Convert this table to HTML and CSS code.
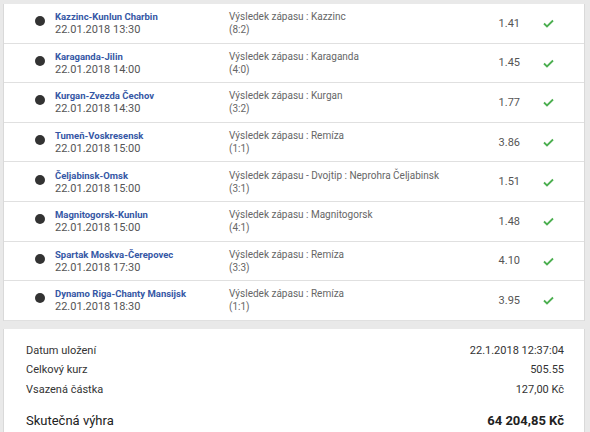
FILE: index.html
```html
<!DOCTYPE html>
<html lang="cs">
  <head>
    <meta charset="UTF-8" />
    <meta name="viewport" content="width=device-width, initial-scale=1.0" />
    <title>Tiket</title>
    <link rel="stylesheet" href="styles.css">
  </head>
  <body>
    <div class="ticket">
      <div class="bets">
        <div class="bet">
          <span class="dot"></span>
          <div class="match">
            <a class="match-name" href="#">Kazzinc-Kunlun Charbin</a>
            <div class="match-date">22.01.2018 13:30</div>
          </div>
          <div class="tip">Výsledek zápasu : Kazzinc<br />(8:2)</div>
          <div class="odds">1.41</div>
          <div class="state"><svg width="11" height="9" viewBox="0 0 11 9"><polyline points="1,4.5 4,7.5 10,1.5" fill="none" stroke="#4caf50" stroke-width="1.8" /></svg></div>
        </div>
        <div class="bet">
          <span class="dot"></span>
          <div class="match">
            <a class="match-name" href="#">Karaganda-Jilin</a>
            <div class="match-date">22.01.2018 14:00</div>
          </div>
          <div class="tip">Výsledek zápasu : Karaganda<br />(4:0)</div>
          <div class="odds">1.45</div>
          <div class="state"><svg width="11" height="9" viewBox="0 0 11 9"><polyline points="1,4.5 4,7.5 10,1.5" fill="none" stroke="#4caf50" stroke-width="1.8" /></svg></div>
        </div>
        <div class="bet">
          <span class="dot"></span>
          <div class="match">
            <a class="match-name" href="#">Kurgan-Zvezda Čechov</a>
            <div class="match-date">22.01.2018 14:30</div>
          </div>
          <div class="tip">Výsledek zápasu : Kurgan<br />(3:2)</div>
          <div class="odds">1.77</div>
          <div class="state"><svg width="11" height="9" viewBox="0 0 11 9"><polyline points="1,4.5 4,7.5 10,1.5" fill="none" stroke="#4caf50" stroke-width="1.8" /></svg></div>
        </div>
        <div class="bet">
          <span class="dot"></span>
          <div class="match">
            <a class="match-name" href="#">Tumeň-Voskresensk</a>
            <div class="match-date">22.01.2018 15:00</div>
          </div>
          <div class="tip">Výsledek zápasu : Remíza<br />(1:1)</div>
          <div class="odds">3.86</div>
          <div class="state"><svg width="11" height="9" viewBox="0 0 11 9"><polyline points="1,4.5 4,7.5 10,1.5" fill="none" stroke="#4caf50" stroke-width="1.8" /></svg></div>
        </div>
        <div class="bet">
          <span class="dot"></span>
          <div class="match">
            <a class="match-name" href="#">Čeljabinsk-Omsk</a>
            <div class="match-date">22.01.2018 15:00</div>
          </div>
          <div class="tip">Výsledek zápasu - Dvojtip : Neprohra Čeljabinsk<br />(3:1)</div>
          <div class="odds">1.51</div>
          <div class="state"><svg width="11" height="9" viewBox="0 0 11 9"><polyline points="1,4.5 4,7.5 10,1.5" fill="none" stroke="#4caf50" stroke-width="1.8" /></svg></div>
        </div>
        <div class="bet">
          <span class="dot"></span>
          <div class="match">
            <a class="match-name" href="#">Magnitogorsk-Kunlun</a>
            <div class="match-date">22.01.2018 15:00</div>
          </div>
          <div class="tip">Výsledek zápasu : Magnitogorsk<br />(4:1)</div>
          <div class="odds">1.48</div>
          <div class="state"><svg width="11" height="9" viewBox="0 0 11 9"><polyline points="1,4.5 4,7.5 10,1.5" fill="none" stroke="#4caf50" stroke-width="1.8" /></svg></div>
        </div>
        <div class="bet">
          <span class="dot"></span>
          <div class="match">
            <a class="match-name" href="#">Spartak Moskva-Čerepovec</a>
            <div class="match-date">22.01.2018 17:30</div>
          </div>
          <div class="tip">Výsledek zápasu : Remíza<br />(3:3)</div>
          <div class="odds">4.10</div>
          <div class="state"><svg width="11" height="9" viewBox="0 0 11 9"><polyline points="1,4.5 4,7.5 10,1.5" fill="none" stroke="#4caf50" stroke-width="1.8" /></svg></div>
        </div>
        <div class="bet">
          <span class="dot"></span>
          <div class="match">
            <a class="match-name" href="#">Dynamo Riga-Chanty Mansijsk</a>
            <div class="match-date">22.01.2018 18:30</div>
          </div>
          <div class="tip">Výsledek zápasu : Remíza<br />(1:1)</div>
          <div class="odds">3.95</div>
          <div class="state"><svg width="11" height="9" viewBox="0 0 11 9"><polyline points="1,4.5 4,7.5 10,1.5" fill="none" stroke="#4caf50" stroke-width="1.8" /></svg></div>
        </div>
      </div>
      <div class="summary">
        <div class="summary-row">
          <span>Datum uložení</span>
          <span>22.1.2018 12:37:04</span>
        </div>
        <div class="summary-row">
          <span>Celkový kurz</span>
          <span>505.55</span>
        </div>
        <div class="summary-row">
          <span>Vsazená částka</span>
          <span>127,00 Kč</span>
        </div>
        <div class="summary-row total">
          <span>Skutečná výhra</span>
          <span class="total-value">64 204,85 Kč</span>
        </div>
      </div>
    </div>
  </body>
</html>
```

FILE: styles.css
```css
body {
  margin: 0;
  background-color: #e9e9e9;
  font-family: Roboto, "Liberation Sans", Arial, sans-serif;
  font-size: 11px;
  color: #333;
  overflow: hidden;
}
.ticket {
  margin: 4px 5px 0 3px;
}
.bets {
  background-color: #fff;
  border-left: 1px solid #d9d9d9;
  border-right: 1px solid #d9d9d9;
}
.bet {
  display: grid;
  grid-template-columns: 10px 184px 1fr 60px 56px;
  align-items: center;
  height: 38.6px;
  padding-left: 31px;
  padding-right: 8px;
  border-bottom: 1px solid #e0e0e0;
}
.dot {
  width: 10px;
  height: 10px;
  border-radius: 50%;
  background-color: #333;
  margin-top: -4px;
}
.match {
  padding-left: 10px;
  line-height: 13px;
}
.match-name {
  color: #3557a5;
  font-size: 9.5px;
  font-weight: bold;
  text-decoration: none;
}
.match-date {
  color: #555;
}
.tip {
  color: #666;
  font-size: 10px;
  line-height: 13px;
}
.odds {
  color: #555;
  text-align: right;
  font-size: 11px;
}
.state {
  text-align: center;
  padding-top: 3px;
}
.summary {
  margin-top: 8px;
  background-color: #fff;
  border-left: 1px solid #d9d9d9;
  border-right: 1px solid #d9d9d9;
  padding: 12px 20px 10px 22px;
}
.summary-row {
  display: flex;
  justify-content: space-between;
  line-height: 19.5px;
}
.total {
  margin-top: 12px;
  font-size: 13px;
  color: #222;
}
.total-value {
  font-weight: bold;
}
```
